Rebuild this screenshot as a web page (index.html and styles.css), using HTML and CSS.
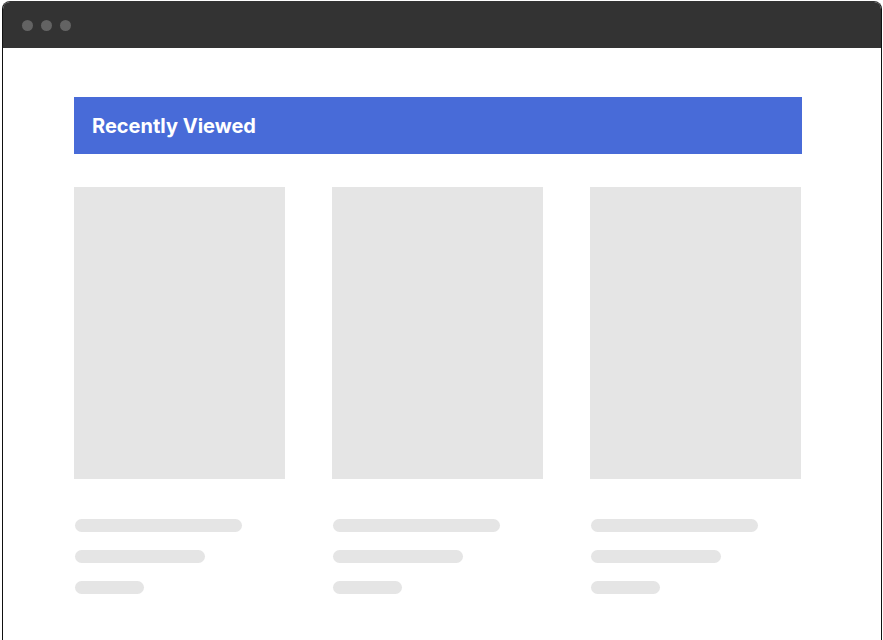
FILE: index.html
```html
<!DOCTYPE html>
<html lang="en">
    <head>
        <meta charset="utf-8">
        <meta name="viewport" content="width=device-width, initial-scale=1.0">
        <title>Recently Viewed</title>
        <link rel="stylesheet" href="styles.css">
    </head>
    <body>
        <div class="window">
            <!-- browser chrome -->
            <div class="titlebar">
                <span class="dot"></span>
                <span class="dot"></span>
                <span class="dot"></span>
            </div>
            <div class="content">
                <div class="section-header">
                    <h2>Recently Viewed</h2>
                </div>
                <div class="products">
                    <div class="product">
                        <div class="thumb"></div>
                        <div class="line line-long"></div>
                        <div class="line line-mid"></div>
                        <div class="line line-short"></div>
                    </div>
                    <div class="product">
                        <div class="thumb"></div>
                        <div class="line line-long"></div>
                        <div class="line line-mid"></div>
                        <div class="line line-short"></div>
                    </div>
                    <div class="product">
                        <div class="thumb"></div>
                        <div class="line line-long"></div>
                        <div class="line line-mid"></div>
                        <div class="line line-short"></div>
                    </div>
                </div>
            </div>
        </div>
    </body>
</html>
```

FILE: styles.css
```css
/* page */
body{
    margin: 0;
    background-color: white;
    font-family: Inter, "Liberation Sans", Arial, sans-serif;
}
/* the fake browser window */
.window{
    width: 878px;
    height: 639px;
    margin: 1px 0 0 2px;
    border: 1px solid #111;
    border-top-color: #333;
    border-bottom: none;
    border-radius: 8px 8px 0 0;
    overflow: hidden;
    background-color: white;
}
.titlebar{
    height: 46px;
    background-color: #333;
    display: flex;
    align-items: center;
    gap: 8px;
    padding-left: 19px;
}
.dot{
    width: 11px;
    height: 11px;
    border-radius: 50%;
    background-color: #636363;
}
.content{
    width: 728px;
    margin-left: 71px;
    padding-top: 49px;
}
/* blue heading bar */
.section-header{
    height: 57px;
    background-color: #486bd8;
    display: flex;
    align-items: center;
    padding-left: 18px;
}
.section-header h2{
    margin: 0;
    color: white;
    font-size: 20px;
    font-weight: 700;
}
.products{
    display: grid;
    grid-template-columns: repeat(3, 211px);
    column-gap: 47px;
    margin-top: 33px;
}
.thumb{
    height: 292px;
    background-color: #e5e5e5;
    margin-bottom: 40px;
}
/* placeholder text lines */
.line{
    height: 13px;
    border-radius: 7px;
    background-color: #e5e5e5;
    margin-left: 1px;
    margin-bottom: 18px;
}
.line-long{
    width: 167px;
}
.line-mid{
    width: 130px;
}
.line-short{
    width: 69px;
}
```
